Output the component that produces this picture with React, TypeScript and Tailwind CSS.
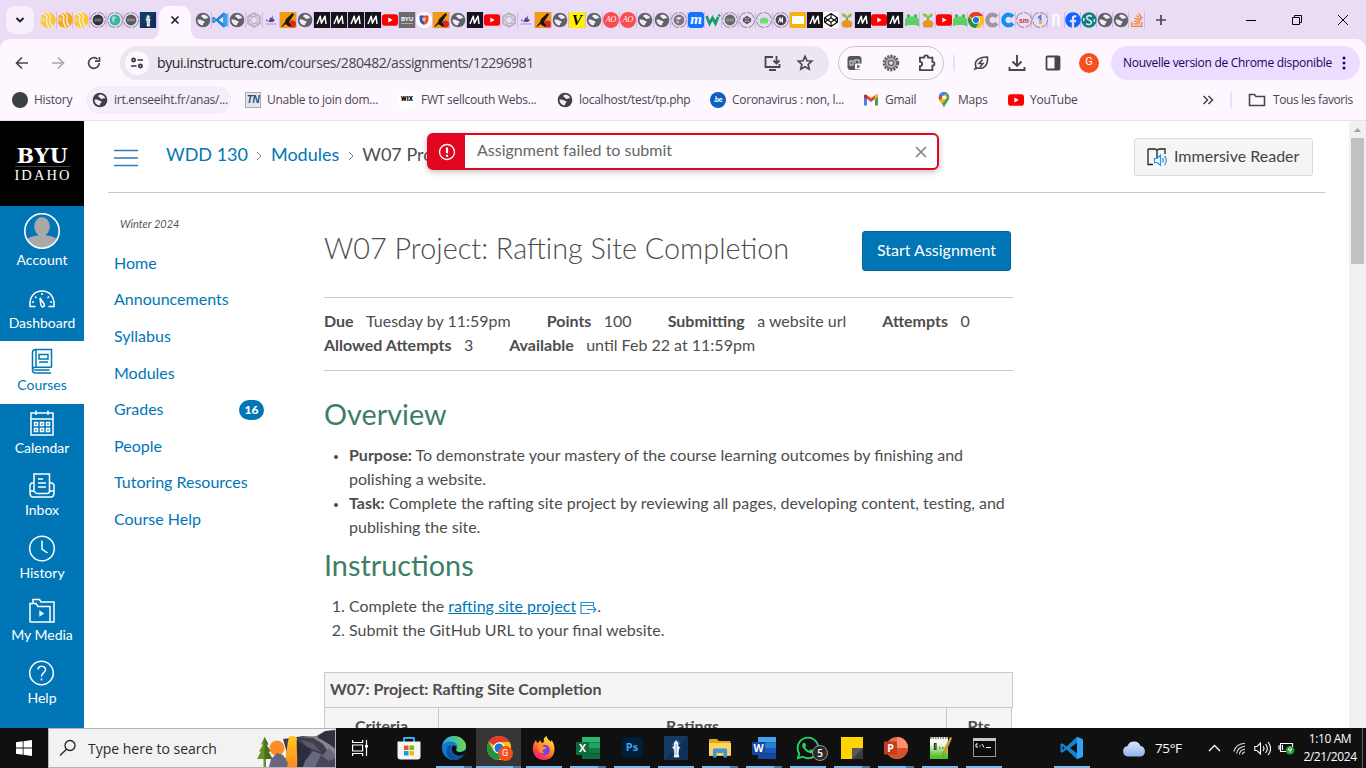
import React from "react";
import { FaFacebook, FaStackOverflow, FaCodepen, FaWhatsapp } from "react-icons/fa";

type P = { s?: number };

const Globe = ({ s = 16, c = "#5f6368" }: P & { c?: string }) => (
  <svg width={s} height={s} viewBox="0 0 16 16" className="shrink-0">
    <circle cx="8" cy="8" r="7.3" fill={c} />
    <path d="M8.6 2.6C7 3 6 3.4 6.300 4.600c.3 1 1.700.4 2 1.400.3 1 1.900 1.300 2.700.6.600-.5 1.400-.4 2.300-.3C12.700 4.300 10.800 2.800 8.600 2.600z" fill="#f3eafa" />
    <path d="M2.400 7.800c1.800-.4 3.300-.3 4.300.5.8.7 2.600.4 2.800 1.500.2 1.100-1.200 1.200-1.300 2.100-.1.600-.2 1.300-.9 1.500C4.500 13 2.500 10.600 2.400 7.800z" fill="#f3eafa" />
  </svg>
);

const VSCode = ({ s = 16 }: P) => (
  <svg width={s} height={s} viewBox="0 0 24 24" className="shrink-0">
    <path d="M17 .8L6.500 10.400 2.300 7.200.5 8.100v7.800l1.800.9 4.200-3.200L17 23.200l6-2.600V3.400zM2.700 14V10l2 2zM17 6.800v10.400L10 12z" fill="#1583cf" />
    <path d="M17 .8v22.400l6-2.600V3.400z" fill="#2fa4ee" />
  </svg>
);

const YouTube = ({ s = 16 }: P) => (
  <svg width={s} height={s} viewBox="0 0 16 16" className="shrink-0">
    <rect x="0" y="2.300" width="16" height="11.400" rx="2.800" fill="#f00" />
    <path d="M6.300 5.500v5L10.700 8z" fill="#fff" />
  </svg>
);

const Chrome = ({ s = 16 }: P) => (
  <svg width={s} height={s} viewBox="0 0 24 24" className="shrink-0">
    <circle cx="12" cy="12" r="12" fill="#fbc116" />
    <path d="M12 12L1.600 6A12 12 0 0 1 22.400 6H12z" fill="#e33b2e" />
    <path d="M1.600 6A12 12 0 0 0 12 24l5.200-9L12 12 6.800 15z" fill="#229342" />
    <path d="M22.400 6A12 12 0 0 1 12 24l5.200-9V6z" fill="#fbc116" />
    <circle cx="12" cy="12" r="5.800" fill="#fff" />
    <circle cx="12" cy="12" r="4.500" fill="#1a73e8" />
  </svg>
);

const MBox = () => (
  <span className="flex h-4 w-4 shrink-0 items-center justify-center bg-[#15141a]">
    <svg width="12" height="10" viewBox="0 0 12 10" fill="none" stroke="#fff" strokeWidth="1.500" strokeLinejoin="round">
      <path d="M1 9L4.200 1.200 5.400 8.200 9 1.200 10 9" />
    </svg>
  </span>
);

const Road = ({ c }: { c: string }) => (
  <svg width="16" height="16" viewBox="0 0 16 16" className="shrink-0">
    <circle cx="8" cy="8" r="7.800" fill={c} />
    <path d="M2 1.500c6 1.500 5 4.500 4.500 6S7 12 9 15.500M5.500 0c5.500 2 5 4.500 4.500 6.500s0 5 2.500 8" stroke="#f7eadf" strokeWidth="1.400" fill="none" />
    <path d="M0 2l3-2H0zM0 4l5 2c0 3-1 4-5 4z" fill="#ebdcf6" opacity=".5" />
  </svg>
);

const Ring = ({ c, children }: { c?: string; children?: React.ReactNode }) => (
  <svg width="16" height="16" viewBox="0 0 16 16" className="shrink-0">
    <circle cx="8" cy="8" r="7.400" fill="none" stroke="#8c8792" strokeWidth="1" strokeDasharray="10 1.600" />
    {c && <circle cx="8" cy="8" r="5.400" fill={c} />}
    {children}
  </svg>
);

const Lighthouse = ({ s = 16 }: P) => (
  <svg width={s} height={s} viewBox="0 0 24 24" className="shrink-0">
    <rect width="24" height="24" fill="#143a63" />
    <path d="M0 24L24 0v24z" fill="#0f3158" />
    <path d="M5 5c5 3 3 9 5 13l1 4h3V9l3-2-4-3-3 1-1 3z" fill="#6e93b4" opacity=".4" />
    <path d="M10 7l2.100-2.800L14.300 7v3l2.200 2-1.500.8-.4 5.500.8 3h-5.800l.8-3L10 12.800 8 12l2-2z" fill="#eef4f8" />
    <path d="M12.100 8v11" stroke="#7d98b3" strokeWidth=".8" />
  </svg>
);

const Hex = () => (
  <svg width="16" height="16" viewBox="0 0 16 16" className="shrink-0" fill="none" stroke="#b9b4bd">
    <path d="M8 1.200l6 3.400v6.800l-6 3.400-6-3.400V4.600z" strokeWidth="1.900" />
    <path d="M8 4.300l3.300 1.900v3.700L8 11.800 4.700 9.900V6.200zM8 1.500L11 6M14 5l-3 4.500M13.500 11l-5.500.5M8 14.500L5 10M2 11l3-4.500M2.500 5L8 4.500" strokeWidth="1" />
  </svg>
);

const Boat = () => (
  <svg width="16" height="16" viewBox="0 0 16 16" className="shrink-0">
    <path d="M6 8.500L7.500 5l.8 1.500L9.500 3l.3 3.500L12 8l-2 2H5zM3.500 7L5 8.500 3 9.500z" fill="#54489b" />
    <path d="M2.500 12h11" stroke="#aaa3cf" strokeWidth="1.200" />
  </svg>
);

const Rocket = () => (
  <svg width="16" height="16" viewBox="0 0 16 16" className="shrink-0">
    <rect width="16" height="16" fill="#f39c0c" />
    <circle cx="12.500" cy="12" r="3.500" fill="#d7261e" />
    <path d="M12.500 1l1.500 1.500L9 10l-3 1.500L2 15l-.5-.7L5 10l1-3z" fill="#1c1614" />
    <path d="M7 8l4 5-1 2-5-3z" fill="#1c1614" />
  </svg>
);

const Frog = () => (
  <svg width="16" height="16" viewBox="0 0 16 16" className="shrink-0" fill="#5fd068">
    <path d="M1 8.500C1 6 3 4.500 8 4.500S15 6 15 8.500L14 13H2z" />
    <circle cx="4.500" cy="4" r="1.900" /><circle cx="11.500" cy="4" r="1.900" />
    <path d="M1 9l2.500 5H1zM15 9l-2.500 5H15z" />
    <circle cx="4.500" cy="4" r=".7" fill="#1d5c30" /><circle cx="11.500" cy="4" r=".7" fill="#1d5c30" />
  </svg>
);

const Plant = () => (
  <svg width="16" height="16" viewBox="0 0 16 16" className="shrink-0">
    <path d="M8 9V5" stroke="#4c9a2a" strokeWidth="1.500" />
    <path d="M8 5.500C5 6 3 4.500 2.500 1.500 6 1 8 2.500 8 5.500zM8 6c0-3 2-4.500 5-4.500C13 4.500 11 6.500 8 6z" fill="#86c440" />
    <ellipse cx="8" cy="11.700" rx="5.500" ry="3.800" fill="#e8961e" />
    <path d="M3 13.500c2 2.500 8 2.500 10 0l-1 1.700H4z" fill="#a85c10" />
  </svg>
);

const Sq = ({ cls, children }: { cls: string; children?: React.ReactNode }) => (
  <span className={"flex h-4 w-4 shrink-0 items-center justify-center leading-none " + cls}>{children}</span>
);

const AO = () => <Sq cls="rounded-full bg-[#fb4b50] font-['Liberation_Serif'] text-[8px] italic text-white">AO</Sq>;
const BYUMini = () => (
  <Sq cls="flex-col bg-[#6b6b6b] font-['Lato'] text-[6px] font-black text-white"><span>BYU</span><span className="mt-px h-px w-3 bg-[#aaa]" /></Sq>
);
const C = ({ c }: { c: string }) => (
  <svg width="16" height="16" viewBox="0 0 16 16" className="shrink-0">
    <path d="M12.800 4.800A5.300 5.300 0 1 0 12.800 11.200" fill="none" stroke={c} strokeWidth="4.200" />
  </svg>
);

const group1 = [
  <Road c="#fdc82f" />, <Road c="#f5a81c" />, <Road c="#fdc82f" />,
  <Ring c="#33343a"><path d="M4.500 7.200h7M4.500 8.800h7" stroke="#a9a9a9" strokeWidth=".7" /></Ring>,
  <Ring c="#38b59f"><path d="M5 5l3-1 1 2-2 2 1 3-3-2z" fill="#9be0d3" /></Ring>,
  <Ring c="#55565a"><path d="M4 7.200h8M4 8.800h8" stroke="#b9b9b9" strokeWidth=".7" /></Ring>,
  <Lighthouse />,
];

const group2 = [
  <Globe />, <VSCode />, <Globe />, <Hex />, <Boat />, <Rocket />, <Globe />,
  <MBox />, <MBox />, <MBox />, <MBox />, <YouTube />, <BYUMini />,
  <svg width="16" height="16" viewBox="0 0 16 16" className="shrink-0"><circle cx="8" cy="8" r="8" fill="#fff" /><path d="M3.500 3.500H8V13C5 12 3.500 10 3.500 7z" fill="#2b4fd8" /><path d="M8 3.500h4.500V7C12.500 10 11 12 8 13z" fill="#e8453c" /><path d="M6.300 5.500h3.400v2.500L8 10 6.300 8z" fill="#ffc94a" /></svg>,
  <Rocket />, <Globe />, <MBox />, <YouTube />, <Hex />, <Boat />, <Rocket />, <Globe />,
  <Sq cls="bg-[#fff200] font-['Liberation_Serif'] text-[15px] font-bold italic text-black">V</Sq>,
  <Globe />, <AO />, <AO />, <Globe />, <Globe />,
  <Ring c="#7b7780"><path d="M5 7c2-3 4-2 5.500-1.500L9 7.500 6.500 7.500zM5 9l3 .5-1 2z" fill="#ebdcf6" /></Ring>,
  <svg width="16" height="16" viewBox="0 0 16 16" className="shrink-0"><rect width="16" height="16" rx="3" fill="#1673ff" /><text x="8" y="11.500" fontSize="15" fontWeight="700" fontStyle="italic" textAnchor="middle" fill="#fff" fontFamily="Liberation Serif">m</text></svg>,
  <svg width="16" height="16" viewBox="0 0 16 16" className="shrink-0"><path d="M1.500 4l3 7.500L7.500 6l3 5.500L13 5" fill="none" stroke="#13a06f" strokeWidth="2.800" /><circle cx="14.200" cy="3.500" r="1.300" fill="#13a06f" /></svg>,
  <Ring c="#67686c"><path d="M4 7.200h8M4 8.800h8" stroke="#b9b9b9" strokeWidth=".7" /></Ring>,
  <Ring><path d="M8 4.500l3.500 2.300v2.400L8 11.500 4.500 9.200V6.800zM8 4.500V7M8 9v2.500M4.500 6.800l7 2.400M11.500 6.800l-7 2.400" stroke="#55515a" fill="none" strokeWidth="1.200" /></Ring>,
  <Ring><path d="M3.500 8c0-3.500 9-3.500 9 0l-1 3.500h-7z" fill="#6fdc78" /></Ring>,
  <Ring c="#47464e"><path d="M5.500 10.500L7 5.500l.8 4.500L9.500 5.500v5" stroke="#fff" fill="none" /></Ring>,
  <Sq cls="rounded-[2px] bg-[#f4b400]"><span className="h-2 w-3 bg-white" /></Sq>,
];

const group3 = [
  <MBox />,
  <Sq cls="bg-white"><FaCodepen size={14} color="#111" /></Sq>,
  <Plant />, <MBox />, <YouTube />, <MBox />, <Frog />, <Plant />, <YouTube />, <Frog />, <Chrome />,
  <C c="#9b979b" />, <C c="#0c93f5" />,
  <Ring><text x="8" y="10.500" fontSize="7" fontWeight="700" textAnchor="middle" fill="#c33a34" fontFamily="Liberation Sans">sm</text></Ring>,
  <Ring><path d="M6 6l2.500-2v8" stroke="#3f82ee" strokeWidth="1.900" fill="none" /><path d="M8.500 8v4" stroke="#eeb32e" strokeWidth="1.900" /></Ring>,
  <svg width="16" height="16" viewBox="0 0 16 16" className="shrink-0"><path d="M5.500 2v12M6.500 4.500c1.500-2.500 4-1.500 4 1V14" stroke="#fbf7ff" strokeWidth="2.600" fill="none" /></svg>,
  <FaFacebook size={16} color="#0866ff" className="shrink-0" />,
  <svg width="16" height="16" viewBox="0 0 16 16" className="shrink-0"><circle cx="8" cy="8" r="7.700" fill="#147d80" /><path d="M11 4.500C8 2.500 4.500 4.500 6 6.700s5 1.300 4.500 4-4 2-5.500 1" stroke="#d5f0ee" strokeWidth="1.500" fill="none" /><path d="M2.800 6v3M13.300 7v3" stroke="#d5f0ee" strokeWidth="1.500" /></svg>,
  <Globe />, <Globe />,
  <FaStackOverflow size={16} color="#f48024" className="shrink-0" />,
];

const Tabs = ({ items, cell }: { items: React.ReactNode[]; cell: string }) => (
  <>
    {items.map((it, i) => (
      <span key={i} className={"flex shrink-0 items-center border-r border-[#d3b8f6] " + cell}>{it}</span>
    ))}
  </>
);

const ui = "font-['Open_Sans','Noto_Sans',sans-serif]";

const TabStrip = () => (
  <div className="flex h-10 items-stretch bg-[#ebdcf6]">
    <div className="flex w-10 shrink-0 items-center pl-1.5">
      <span className="flex h-7 w-7 items-center justify-center rounded-[9px] bg-[#f8effd]">
        <svg width="10" height="8" viewBox="0 0 10 8" fill="none" stroke="#1d1b20" strokeWidth="1.800"><path d="M1.500 2L5 5.500 8.500 2" /></svg>
      </span>
    </div>
    <div className="flex w-[119px] shrink-0 items-center"><div className="flex h-4"><Tabs items={group1} cell="w-[16.7px]" /></div></div>
    <div className="flex w-9 shrink-0 items-end">
      <div className="relative flex h-[34px] w-8 items-center justify-center rounded-t-[10px] bg-[#fef7ff] pb-1.5">
        <svg width="10" height="10" viewBox="0 0 10 10" stroke="#1d1b20" strokeWidth="1.600"><path d="M1.500 1.500l7 7M8.500 1.500l-7 7" /></svg>
        <svg width="10" height="10" viewBox="0 0 10 10" className="absolute bottom-0 -left-[10px]" fill="#fef7ff"><path d="M10 0v10H0A10 10 0 0 0 10 0z" /></svg>
        <svg width="10" height="10" viewBox="0 0 10 10" className="absolute -right-[10px] bottom-0" fill="#fef7ff"><path d="M0 0v10h10A10 10 0 0 1 0 0z" /></svg>
      </div>
    </div>
    <div className="flex w-[612px] shrink-0 items-center"><div className="flex h-4"><Tabs items={group2} cell="w-[17px]" /></div></div>
    <div className="flex w-[340px] shrink-0 items-center"><div className="flex h-4"><Tabs items={group3} cell="w-[16.1px]" /></div></div>
    <div className="flex flex-1 items-center">
      <svg width="28" height="12" viewBox="0 0 28 12" stroke="#49454f" strokeWidth="1.700"><path d="M14 1v10M9 6h10" /></svg>
      <svg width="14" height="12" viewBox="0 0 14 12" className="ml-[69px]" stroke="#000"><path d="M2 6.500h10" /></svg>
      <svg width="12" height="12" viewBox="0 0 12 12" className="ml-[33px]" fill="none" stroke="#000"><path d="M1.500 3.500h7v7h-7zM3.500 3.500v-2h7v7h-2" /></svg>
      <svg width="12" height="12" viewBox="0 0 12 12" className="ml-[34px]" stroke="#000"><path d="M1 1l10 10M11 1L1 11" /></svg>
    </div>
  </div>
);

const Toolbar = () => (
  <div className="-mt-px bg-[#ebdcf6]">
  <div className="flex h-[47px] items-center rounded-t-[10px] bg-[#fef7ff] pr-1.5">
    <svg width="96" height="20" viewBox="0 0 96 20" className="ml-2.5 shrink-0" fill="none" strokeWidth="1.700">
      <path d="M18 10H7M12 4.500L6.500 10l5.500 5.500" stroke="#49454f" />
      <path d="M42 10h11M48 4.500l5.500 5.500-5.500 5.500" stroke="#aba7ae" />
      <path d="M89.200 10a5.300 5.300 0 1 1-1.600-3.800M89.500 4v4.200H85" stroke="#49454f" />
    </svg>
    <div className="ml-3.5 flex h-[34px] w-[709px] shrink-0 items-center rounded-full bg-[#ede6f0] pl-[5px]">
      <span className="flex h-6 w-6 items-center justify-center rounded-full bg-[#fef7ff]">
        <svg width="12" height="12" viewBox="0 0 12 12" fill="none" stroke="#35313a" strokeWidth="1.700"><circle cx="2.600" cy="3" r="1.600" /><path d="M6.500 3H12M0 9h5.500" /><circle cx="9.400" cy="9" r="1.600" /></svg>
      </span>
      <span className={"ml-2 w-[600px] whitespace-nowrap text-[14px] tracking-[-0.42px] text-[#49454f] " + ui}><span className="text-[#1d1b20]">byui.instructure.com</span>/courses/280482/assignments/12296981</span>
      <svg width="20" height="18" viewBox="0 0 20 18" className="ml-1.5 shrink-0" fill="none" stroke="#49454f" strokeWidth="1.800"><path d="M10 3H2.500v10h14v-3M6 16h7M13.500 2v7M10.500 6.500l3 3 3-3" /></svg>
      <svg width="18" height="18" viewBox="0 0 24 24" className="ml-[13px] shrink-0" fill="none" stroke="#49454f" strokeWidth="2.200"><path d="M12 3l2.600 6 6.400.6-4.800 4.300 1.400 6.300L12 16.900l-5.600 3.300 1.400-6.300L3 9.600 9.400 9z" /></svg>
    </div>
    <div className="ml-[9px] flex h-[34px] w-[106px] shrink-0 items-center rounded-full border border-[#cac4cf] pl-2">
      <svg width="16" height="16" viewBox="0 0 16 16"><rect x=".5" y="1" width="14" height="14" rx="3" fill="#55565a" /><path d="M3 6h3v4H3zM8 8V5h4v3" stroke="#bbb" fill="none" strokeWidth="1.500" /><rect x="8" y="8.500" width="7" height="6" rx="1" fill="#fff" /><path d="M10 9.500l3.500 2-3.500 2z" fill="#666" /></svg>
      <svg width="18" height="18" viewBox="0 0 18 18" className="ml-[19px]"><circle cx="9" cy="9" r="7.200" fill="none" stroke="#5c5c5c" strokeWidth="2.200" strokeDasharray="2.200 1.100" /><circle cx="9" cy="9" r="6.300" fill="#6a6a6a" /><circle cx="9" cy="9" r="4.200" fill="none" stroke="#b5b5b5" strokeWidth="1.800" /><circle cx="9" cy="9" r="1.800" fill="#e7e3ea" /></svg>
      <svg width="20" height="20" viewBox="0 0 24 24" className="ml-[17px]" fill="none" stroke="#49454f" strokeWidth="2.200"><path d="M3.500 5.500h5.200c0-3.500 4.600-3.500 4.600 0h5.200v5.200c3.300 0 3.300 4.600 0 4.600v5.200h-15v-4.700c3.600-.4 3.600-5 0-5.400z" /></svg>
    </div>
    <span className="ml-[9px] h-4 w-0.5 bg-[#eaddff]" />
    <svg width="18" height="18" viewBox="0 0 18 18" className="ml-[17px] shrink-0" fill="none" stroke="#49454f" strokeWidth="1.600"><path d="M3 15l1-2c-2-5 1-10 11.500-10C16 11 12.500 15.500 6 14z M10.500 5.500L7 9.500h4L8 13" /></svg>
    <svg width="18" height="18" viewBox="0 0 18 18" className="ml-[18px] shrink-0" fill="none" stroke="#49454f" strokeWidth="1.900"><path d="M9 1v10.500M4.500 7.500L9 12l4.500-4.500M1.500 13v3h15v-3" /></svg>
    <svg width="16" height="16" viewBox="0 0 16 16" className="ml-[19px] shrink-0"><rect x="1.500" y="1.500" width="13" height="13" rx="1" fill="none" stroke="#49454f" strokeWidth="1.800" /><path d="M9.500 1.500h5v13h-5z" fill="#49454f" /></svg>
    <span className="ml-[18px] flex h-5 w-5 shrink-0 items-center justify-center rounded-full bg-[#f4511e] font-['Roboto'] text-[11px] text-white">G</span>
    <div className="ml-3 flex h-[34px] w-[249px] shrink-0 items-center rounded-full bg-[#eaddff] pl-3">
      <span className={"w-[216px] whitespace-nowrap text-[12px] tracking-[-0.29px] text-[#21005d] " + ui}>Nouvelle version de Chrome disponible</span>
      <svg width="4" height="14" viewBox="0 0 4 14" className="ml-[3px]" fill="#21005d"><circle cx="2" cy="2" r="1.500" /><circle cx="2" cy="7" r="1.500" /><circle cx="2" cy="12" r="1.500" /></svg>
    </div>
  </div>
  </div>
);

const BM = ({ w, icon, t, gap = "ml-1.5" }: { w: string; icon: React.ReactNode; t: string; gap?: string }) => (
  <div className={"flex shrink-0 items-center whitespace-nowrap " + w}>{icon}<span className={gap}>{t}</span></div>
);

const Bookmarks = () => (
  <div className={"flex h-[35px] items-center border-b border-[#e7e0ec] bg-[#fef7ff] pb-[7px] pl-3 text-[12px] tracking-[-0.26px] text-[#49454f] " + ui}>
    <BM w="w-[74px]" icon={<span className="h-4 w-4 rounded-full bg-[#3c4043]" />} t="History" />
    <BM w="w-[145px] h-7 rounded-full bg-[#f5edf7] pl-1.5" icon={<Globe c="#3c4043" />} t="irt.enseeiht.fr/anas/..." />
    <BM w="ml-3.5 w-[154px]" icon={<span className="flex h-4 w-4 items-center justify-center border border-[#aaa] bg-[#dfe7ee] font-['Liberation_Sans'] text-[10px] font-bold italic tracking-tighter text-[#2f4a6d]">TN</span>} t="Unable to join dom..." />
    <BM w="w-[158px]" icon={<span className="flex h-4 w-4 items-center justify-center bg-white font-['Roboto'] text-[6.5px] font-black tracking-normal text-black">WIX</span>} t="FWT sellcouth Webs..." />
    <BM w="w-[153px]" icon={<Globe c="#3c4043" />} t="localhost/test/tp.php" />
    <BM w="w-[153px]" icon={<span className="flex h-4 w-4 items-center justify-center rounded-full bg-[#0d5fc0] font-['Lato'] text-[7px] font-black text-white">.be</span>} t="Coronavirus : non, l..." />
    <BM w="w-[73px]" icon={<svg width="16" height="16" viewBox="0 0 16 16"><path d="M1 4v9.500h3V7z" fill="#4285f4" /><path d="M15 4v9.500h-3V7z" fill="#34a853" /><path d="M1 4.500l7 5.500 7-5.500V3.300c-1-1-2-.8-3 0L8 6.200 4 3.300c-1-.8-2-1-3 0z" fill="#ea4335" /><path d="M12 3.300c1-.8 2-1 3 0v1.500l-3 2.500z" fill="#fbbc04" /><path d="M1 3.500c1-1 2-1 3-.2v4L1 5z" fill="#c5221f" /></svg>} t="Gmail" />
    <BM w="w-[72px]" icon={<svg width="16" height="16" viewBox="0 0 16 16"><path d="M8 0a5.300 5.300 0 0 1 5.300 5.300C13.300 9 9.500 10.500 8 16c-1.500-5.500-5.300-7-5.300-10.700A5.300 5.300 0 0 1 8 0z" fill="#34a853" /><path d="M8 0C5.500 0 4 1.200 3.300 3L8 6.500 11.500 1.200C10.500.4 9.300 0 8 0z" fill="#4285f4" /><path d="M3.300 3c-1 2-.6 3.600.7 5.500l4-3z" fill="#ea4335" /><path d="M4 8.500l5.500-6.500 2 3.500-5 6z" fill="#fbbc04" /><circle cx="8" cy="5.300" r="1.900" fill="#fff" /></svg>} t="Maps" />
    <BM w="w-[194px]" icon={<YouTube />} t="YouTube" />
    <svg width="12" height="10" viewBox="0 0 12 10" fill="none" stroke="#49454f" strokeWidth="1.600"><path d="M1.500 1l4 4-4 4M6.500 1l4 4-4 4" /></svg>
    <span className="ml-[16px] h-4 w-0.5 bg-[#eaddff]" />
    <svg width="18" height="14" viewBox="0 0 18 14" className="ml-4" fill="none" stroke="#49454f" strokeWidth="1.600"><path d="M1.500 12.500V1.500h5l1.500 2h8.500v9z" /></svg>
    <span className="ml-[7px] whitespace-nowrap tracking-[-0.4px]">Tous les favoris</span>
  </div>
);

const NavItem = ({ label, active, children }: { label: string; active?: boolean; children: React.ReactNode }) => (
  <div className={"flex h-[62.5px] shrink-0 flex-col items-center pt-[5.5px] " + (active ? "bg-white text-[#0076b6]" : "text-white")}>
    <svg width="28" height="28" viewBox="0 0 28 28" fill="none" stroke="currentColor" strokeWidth="1.500">{children}</svg>
    <span className="mt-[1.6px] whitespace-nowrap text-[14px] leading-[18px]">{label}</span>
  </div>
);

const Sidebar = () => (
  <div className="flex w-[84px] shrink-0 flex-col overflow-hidden bg-[#0076b6]">
    <div className="flex h-[85px] shrink-0 flex-col items-center bg-black pt-[25px] text-white">
      <span className="pl-px font-['DejaVu_Serif'] text-[20.5px] font-bold leading-[20px] tracking-[0.6px]">BYU</span>
      <span className="h-px w-[55px] bg-[#444]" />
      <span className="pl-[2px] font-['Liberation_Serif'] text-[14.500px] leading-[17px] tracking-[2.1px]">IDAHO</span>
    </div>
    <div className="flex h-[72.5px] shrink-0 flex-col items-center pt-[7px] text-white">
      <svg width="36" height="36" viewBox="0 0 36 36">
        <clipPath id="av"><circle cx="18" cy="18" r="16.500" /></clipPath>
        <g clipPath="url(#av)" fill="#a9a9a9"><ellipse cx="18" cy="13.500" rx="7.800" ry="9.500" /><path d="M14 19h8v3.500c6 .5 10 2 12 5V36H2v-8.500c2-3 6-4.500 12-5z" /></g>
        <circle cx="18" cy="18" r="17.200" fill="none" stroke="#fff" strokeWidth="1.600" />
      </svg>
      <span className="mt-[2px] text-[14px] leading-[18px]">Account</span>
    </div>
    <NavItem label="Dashboard"><path d="M7.500 22.500H2v-3C2 12 7 7 14 7s12 5 12 12.500v3h-5.500M14 9v2M7 12.500l1.500 1.500M21 12.500L19.500 14M4 18h2M22 18h2M12 14l.8 6.500c.5 3.500 4.800 2.500 3.300-.5z" /></NavItem>
    <NavItem label="Courses" active><path d="M23.500 20.500V2.500h-16c-2 0-3 1-3 3v17.500c0 2 1 3 3 3H23M4.700 22.500c0-1.500 1-2.200 2.500-2.200H23.500M8 2.500v18M11 7.500h9v4.500h-9zM11 15h9M6 23h15.500" /></NavItem>
    <NavItem label="Calendar"><path d="M3 4h22v22H3zM3 10h22M8 1.500V6M20 1.500V6M6.500 13.500h3v3h-3zM12.500 13.500h3v3h-3zM18.500 13.500h3v3h-3zM6.500 19.500h3v3h-3zM12.500 19.500h3v3h-3zM18.500 19.500h3v3h-3z" /></NavItem>
    <NavItem label="Inbox"><path d="M6 19V2h15.500v17M10 7h5M10 11h8M10 15h8M6 11H3.500L2 13v7.500c0 3 1 4.500 3 4.500h18c2 0 3-1.500 3-4.500V13l-1.500-2h-3M2.500 19H6c1 2.500 2 2.500 3 2.500h10c1.500 0 2.500-1 2.500-2.500h4" /></NavItem>
    <NavItem label="History"><circle cx="14" cy="14.500" r="12.300" /><path d="M14 6.500v8.500l5.500 4" /></NavItem>
    <NavItem label="My Media"><path d="M2 24.500V6.500h6l2 3h12v15.500H3zM5 6V2.500h6.500l1.500 2.500h13V25h-4" /><path d="M11.500 13.500v6l4.500-3z" fill="currentColor" strokeWidth=".3" /></NavItem>
    <NavItem label="Help"><circle cx="13.500" cy="14" r="11.800" /><path d="M10 10.500C10.500 6 18 6.500 17.500 11c-.3 2.500-4 3-4 6.500M13.500 19.500v2" /></NavItem>
  </div>
);

const Crumb = () => (
  <svg width="6" height="10" viewBox="0 0 6 10" className="mx-[8.5px] mt-1" fill="none" stroke="#7b858c" strokeWidth="1"><path d="M1 1l4 4-4 4" /></svg>
);

const Field = ({ k, v, mr }: { k: string; v: string; mr: string }) => (
  <span className={"whitespace-nowrap " + mr}><b className="mr-[12.4px] font-bold">{k}</b>{v}</span>
);

const Page = () => (
  <div className="relative flex min-h-0 flex-1 overflow-hidden bg-white font-['Lato',sans-serif] text-[16px] leading-6 text-[#4d4d4d]">
    <Sidebar />
    <div className="flex min-w-0 flex-1 flex-col pr-6 pl-6">
      <div className="flex h-[72px] shrink-0 items-start border-b border-[#c9c9c9] pl-1.5">
        <svg width="24" height="18" viewBox="0 0 24 18" className="mt-[28px] shrink-0" stroke="#2b7abc" strokeWidth="1.500"><path d="M0 1.500h24M0 9h24M0 16.500h24" /></svg>
        <div className="ml-7 mt-[20px] flex w-[400px] items-center whitespace-nowrap text-[18px] leading-[26px] text-[#0076b6]">
          <span>WDD 130</span><Crumb /><span>Modules</span><Crumb /><span className="text-[#4d4d4d]">W07 Project</span>
        </div>
        <div className="mt-[17px] mr-3 ml-auto flex h-[38px] w-[179px] items-center rounded-[3px] border border-[#d9d9d9] bg-[#f5f5f5] pl-3">
          <svg width="21" height="19" viewBox="0 0 21 19" fill="none"><path d="M1 1h6.500c1.500 0 2 .5 2.500 1.500C10.500 1.500 11 1 12.500 1H18v5M10 2.500V10M1 1v15.500h5" stroke="#222" strokeWidth="1.300" /><path d="M7.500 10.500H10l3.500-3.300v10L10 14.500H7.500zM15.500 10.200c1 1.300 1 3 0 4.300M17.500 8c2.300 2.500 2.300 6.300 0 8.800" stroke="#2a96e0" strokeWidth="1.200" /></svg>
          <span className="ml-1.5 whitespace-nowrap pb-0.5 text-[#444]">Immersive Reader</span>
        </div>
      </div>
      <div className="flex">
        <div className="w-[216px] shrink-0 pl-1.5 text-[#0076b6]">
          <div className="mt-[21px] pl-1.5 text-[11px] italic leading-5 text-[#555]">Winter 2024</div>
          <div className="mt-[10.6px] flex flex-col">
            {["Home", "Announcements", "Syllabus", "Modules", "Grades", "People", "Tutoring Resources", "Course Help"].map((t) => (
              <div key={t} className="flex h-[36.6px] items-center justify-between pr-[60px]">
                <span className="whitespace-nowrap">{t}</span>
                {t === "Grades" && <span className="mt-px flex h-5 w-[25px] shrink-0 items-center justify-center rounded-full bg-[#0076b6] text-[12px] font-black text-white">16</span>}
              </div>
            ))}
          </div>
        </div>
        <div className="flex w-[689px] shrink-0 flex-col">
          <div className="flex h-[104px] shrink-0 items-start justify-between pr-0.5">
            <h1 className="mt-[35px] whitespace-nowrap text-[28.8px] font-light leading-10">W07 Project: Rafting Site Completion</h1>
            <div className="mt-[38px] flex h-10 w-[149px] items-center justify-center rounded-[3px] border border-[#00659b] bg-[#0076b6] pb-0.5 whitespace-nowrap text-white">Start Assignment</div>
          </div>
          <div className="flex h-[74px] shrink-0 flex-col border-y border-[#c9c9c9] pt-[11px]">
            <div className="flex"><Field k="Due" v="Tuesday by 11:59pm" mr="mr-9" /><Field k="Points" v="100" mr="mr-9" /><Field k="Submitting" v="a website url" mr="mr-9" /><Field k="Attempts" v="0" mr="" /></div>
            <div className="flex"><Field k="Allowed Attempts" v="3" mr="mr-9" /><Field k="Available" v="until Feb 22 at 11:59pm" mr="" /></div>
          </div>
          <h2 className="mt-[23px] text-[28.8px] leading-10 text-[#3c7f65]">Overview</h2>
          <ul className="mt-[9px] list-disc pl-[25px] marker:text-[12px]">
            <li><b>Purpose:</b> To demonstrate your mastery of the course learning outcomes by finishing and<br />polishing a website.</li>
            <li><b>Task:</b> Complete the rafting site project by reviewing all pages, developing content, testing, and<br />publishing the site.</li>
          </ul>
          <h2 className="mt-[6px] text-[28.8px] leading-10 text-[#3c7f65]">Instructions</h2>
          <ol className="mt-[9px] list-decimal pl-[25px]">
            <li>Complete the <span className="text-[#0076b6] underline">rafting site project</span><svg width="17" height="14" viewBox="0 0 17 14" className="ml-1 inline-block" fill="none" stroke="#2b8fca" strokeWidth="1.200"><path d="M13.500 4.500V1.500H1v11h9M1 4.500h12.500M7 8.500h9M13 5.500l3 3-3 3" /></svg>.</li>
            <li>Submit the GitHub URL to your final website.</li>
          </ol>
          <div className="mt-[30px] flex h-9 shrink-0 items-center border border-[#c9c9c9] bg-[#f5f5f5] pb-0.5 pl-[5px] font-bold">W07: Project: Rafting Site Completion</div>
          <div className="mr-px flex h-10 shrink-0 border-x border-[#c9c9c9] bg-[#f5f5f5] text-center font-bold">
            <div className="w-[114px] border-r border-[#c9c9c9] pt-1.5">Criteria</div>
            <div className="flex-1 border-r border-[#c9c9c9] pt-1.5">Ratings</div>
            <div className="w-16 pt-1.5">Pts</div>
          </div>
        </div>
      </div>
    </div>
    <div className="flex w-[17px] shrink-0 flex-col items-center bg-[#f1f1f1]">
      <svg width="7" height="4" viewBox="0 0 7 4" className="mt-[7px] mb-1.5" fill="#a3a3a3"><path d="M0 4l3.500-4L7 4z" /></svg>
      <span className="h-[126px] w-[13px] bg-[#c1c1c1]" />
    </div>
    <div className="absolute top-3 left-[427px] flex h-[37px] w-[512px] items-center rounded-[6px] border-2 border-[#e0061f] bg-white shadow-[0_2px_6px_rgba(0,0,0,0.25)]">
      <span className="flex h-full w-9 items-center justify-center bg-[#e0061f]">
        <svg width="18" height="18" viewBox="0 0 18 18" fill="none" stroke="#fff"><circle cx="9" cy="9" r="7.500" strokeWidth="1.300" /><path d="M9 4.500v5.700M9 11.700v2" strokeWidth="2.200" /></svg>
      </span>
      <span className="ml-3 pb-1 text-[#666]">Assignment failed to submit</span>
      <svg width="12" height="12" viewBox="0 0 12 12" className="mr-2.5 ml-auto" stroke="#777f85" strokeWidth="1.500"><path d="M1 1l10 10M11 1L1 11" /></svg>
    </div>
  </div>
);

const Office = ({ l, c1, c2, c3, c4 }: { l: string; c1: string; c2: string; c3: string; c4: string }) => (
  <svg width="24" height="22" viewBox="0 0 24 22">
    <path d="M6 0h18v5.500H6z" fill={c1} /><path d="M6 5.500h18V11H6z" fill={c2} /><path d="M6 11h18v5.500H6z" fill={c3} /><path d="M6 16.500h18V22H6z" fill={c4} />
    <rect x="0" y="5" width="13" height="13" rx="1" fill={c4} />
    <text x="6.500" y="15.300" fontSize="10.500" fontWeight="700" textAnchor="middle" fill="#fff" fontFamily="Open Sans">{l}</text>
  </svg>
);

const Slot = ({ w = "w-11", bar = true, split, hot, children }: { w?: string; bar?: boolean; split?: boolean; hot?: boolean; children?: React.ReactNode }) => (
  <div className={"flex h-10 shrink-0 flex-col items-center " + w + (hot ? " bg-[#363636]" : "")}>
    <div className="flex h-[38px] items-center justify-center pt-px">{children}</div>
    <div className={"flex h-0.5 " + (hot ? "w-full" : "w-9")}>
      {bar && <><span className="flex-1 bg-[#76b9ed]" />{split && <span className="w-2 bg-[#4a7ba3]" />}</>}
    </div>
  </div>
);

const Taskbar = () => (
  <div className="flex h-10 shrink-0 items-center bg-[#101010] text-white">
    <div className="flex w-12 shrink-0 justify-center"><svg width="16" height="16" viewBox="0 0 16 16" fill="#fff"><path d="M0 2.200L6.700 1.300v6.300H0zM7.500 1.200L16 0v7.600H7.500zM0 8.400h6.700v6.300L0 13.800zM7.500 8.400H16V16l-8.500-1.200z" /></svg></div>
    <div className={"flex h-10 w-[288px] shrink-0 items-center overflow-hidden border border-[#b5b5b5] bg-[#f2f2f2] text-[#2b2b2b] " + ui}>
      <svg width="18" height="18" viewBox="0 0 18 18" className="ml-2.5 shrink-0" fill="none" stroke="#222" strokeWidth="1.300"><circle cx="11" cy="6.500" r="5" /><path d="M7.500 10.200L1 16.500" /></svg>
      <span className="ml-[11px] w-[169px] shrink-0 whitespace-nowrap text-[14px]">Type here to search</span>
      <svg width="80" height="38" viewBox="0 0 80 38" className="shrink-0">
        <defs><linearGradient id="wf" x2="0" y2="1"><stop offset="0" stopColor="#ffcb1f" /><stop offset="1" stopColor="#ff8a1f" /></linearGradient></defs>
        <circle cx="20" cy="19" r="7.500" fill="#ff8c2a" />
        <path d="M26 10l8-1 12-2 12 1 10-6 12-1v37H26l4-14z" fill="#3d3d50" />
        <path d="M38 10l8 6 8 4-6 18H40z" fill="#2c2c3c" />
        <path d="M42 8l14 1 10 6 8 12 6 3V14l-10-6-10-1z" fill="#8d8187" />
        <path d="M60 8l10-6 10-1v20l-8-6z" fill="#2e2f3f" />
        <path d="M44 11l12 3 8 9-14-5z" fill="#5b586c" />
        <path d="M33 7c-3 4-2 10-4 18v13h11c1-9-1-20 0-29l-3-2z" fill="url(#wf)" />
        <path d="M14 30l6-6 6 2 5 8-1 4H12zM48 32l8-10 10 4 6-7 8 9v10H46z" fill="#686780" />
        <path d="M58 38l6-12 8 6 8-4v10z" fill="#48465c" />
        <path d="M7.500 8l4 7.500h-2l4 7h-2l4 7.500H9v8H6.500v-8H0l4-7.500H2l4-7h-2z" fill="#6b8f22" />
        <path d="M7.500 8l4 7.500h-2l4 7h-2l4 7.500h-8z" fill="#486f1c" />
      </svg>
    </div>
    <div className="flex w-[51px] shrink-0 items-center pl-4"><svg width="17" height="16" viewBox="0 0 17 16" fill="none" stroke="#fff" strokeWidth="1.200"><path d="M.6 0v2.500h10V0M.6 5h10v6H.6zM.6 16v-2.500h10V16M14.500 0v16" /><path d="M13 5h3v2.500h-3z" fill="#fff" stroke="none" /></svg></div>
    <Slot w="w-11" bar={false}><svg width="24" height="24" viewBox="0 0 24 24"><path d="M7 6V2h10v4" fill="none" stroke="#29b1f0" strokeWidth="1.800" /><path d="M.5 5.500h23v15c0 2-1 3-3 3h-17c-2 0-3-1-3-3z" fill="#f4f4f4" /><path d="M7 9.500h4.500V14H7z" fill="#f25022" /><path d="M12.500 9.500H17V14h-4.500z" fill="#7fba00" /><path d="M7 15h4.500v4.500H7z" fill="#00a4ef" /><path d="M12.500 15H17v4.500h-4.500z" fill="#ffb900" /></svg></Slot>
    <Slot w="w-[45px]" split><svg width="24" height="24" viewBox="0 0 24 24">
      <defs><linearGradient id="eg" x1="0" x2="1"><stop offset="0" stopColor="#2aa7e6" /><stop offset="1" stopColor="#6bdc4a" /></linearGradient></defs>
      <circle cx="12" cy="12" r="12" fill="#1478d0" />
      <path d="M.3 10C1 4 6 0 12 0c7 0 12 5 12 10 0 4-3 6-6 6-3.500 0-4.500-1.500-3.500-3C17 9 13 5.500 8.500 5.500 4.500 5.500 1.300 7.500.3 10z" fill="url(#eg)" />
      <path d="M8.500 13c0 5 5 8 9 7.500 2-.2 3.500-1.500 4.500-2C20 22 16.500 24 12.500 24 8 24 4.500 20 4.500 15.500c0-3.500 2-6 4.500-7-.3 1.500-.5 3-.5 4.500z" fill="#0c4f9e" />
      <path d="M9.500 12.500c0-2 1-3 2.500-3s2.800 1.300 2.500 3c-1 1.500 0 3.500 3.500 3.500 2 0 4.500-.8 5.700-3 0 2-.7 4.500-1.700 5.500-6 3.500-12.500 0-12.500-6z" fill="#101010" />
    </svg></Slot>
    <Slot w="w-[45px]" hot split>
      <span className="relative flex"><Chrome s={24} /><span className="absolute top-2.5 left-[11px] flex h-[15px] w-[15px] items-center justify-center rounded-full bg-[#f4511e] font-['Roboto'] text-[9px] leading-none">G</span></span>
    </Slot>
    <Slot w="w-[45px]"><svg width="24" height="24" viewBox="0 0 24 24">
      <defs><linearGradient id="ff" x1=".8" y1="0" x2=".2" y2="1"><stop offset="0" stopColor="#fff34a" /><stop offset=".4" stopColor="#ff9a1f" /><stop offset=".75" stopColor="#ff3b47" /><stop offset="1" stopColor="#e0207e" /></linearGradient></defs>
      <path d="M4 4l1 3 2-1 1-2 2 3 2-1C11 3 12.500 1 14.500 0c.5 3 3 4.500 4.500 6l.5-2c5 6 4.500 20-7.500 20C4 24 .5 18 .8 12 1 9 2 6 4 4z" fill="url(#ff)" />
      <circle cx="12.500" cy="14" r="5.300" fill="#7542e5" /><path d="M6 9c4-1.500 5.500 2 7 2 2 0 1.500 2-1 2.500-2.500.7-1.500 3 1 3.500-5 2-8-4-7-8z" fill="#ff8f26" />
    </svg></Slot>
    <Slot split><Office l="X" c1="#2cb673" c2="#21a366" c3="#107c41" c4="#106b3a" /></Slot>
    <Slot><span className="flex h-[21px] w-[21px] items-center justify-center rounded-[4px] bg-[#001e36] font-['Open_Sans'] text-[11px] font-bold text-[#31a8ff]">Ps</span></Slot>
    <Slot><Lighthouse s={24} /></Slot>
    <Slot split><svg width="22" height="20" viewBox="0 0 22 20"><path d="M0 1h8l2 2h11.500v15H0z" fill="#e5a50f" /><path d="M0 5h22v12.500H0z" fill="#fcd462" /><path d="M4 19.500V12c0-1 .5-1.500 1.500-1.500h11c1 0 1.500.5 1.500 1.500v7.500h-3.500V15h-7v4.500z" fill="#3d94d8" /></svg></Slot>
    <Slot split><Office l="W" c1="#41a5ee" c2="#2b7cd3" c3="#185abd" c4="#1648a0" /></Slot>
    <Slot><span className="relative flex"><FaWhatsapp size={26} color="#25d366" /><span className="absolute top-[10px] left-[17px] flex h-4 w-4 items-center justify-center rounded-full border border-[#999] bg-[#2b2b2b] font-['Open_Sans'] text-[10px] font-semibold leading-none">5</span></span></Slot>
    <Slot split><svg width="22" height="22" viewBox="0 0 22 22"><path d="M0 0h22v11L11 22H0z" fill="#fed500" /><path d="M11 22h11V11H11z" fill="#3c3c3c" /><path d="M11 11h11L11 22z" fill="#55585d" /></svg></Slot>
    <Slot split><svg width="24" height="24" viewBox="0 0 24 24"><circle cx="13" cy="12" r="11" fill="#ed6c47" /><path d="M13 1a11 11 0 0 1 11 11H13z" fill="#ff8f6b" /><path d="M24 12a11 11 0 0 1-21 4l10-4z" fill="#d35230" /><rect y="5.500" width="13" height="13" rx="1" fill="#c43e1c" /><text x="6.500" y="15.800" fontSize="10.500" fontWeight="700" textAnchor="middle" fill="#fff" fontFamily="Open Sans">P</text></svg></Slot>
    <Slot><svg width="23" height="24" viewBox="0 0 23 24"><defs><linearGradient id="np" x2="0" y2="1"><stop offset=".3" stopColor="#f4f9e8" /><stop offset=".9" stopColor="#4fc322" /></linearGradient></defs><path d="M1 1h18v22H1z" fill="url(#np)" /><path d="M1 2h18" stroke="#888" strokeDasharray="1.500 1" strokeWidth="2" /><path d="M5.500 7.500h1.500v6H5.500zM10 12h1.500M13 12h1.500" stroke="#333" strokeWidth="1.200" fill="none" /><path d="M21 1l2 1-7 16-2 2v-3z" fill="#e8a33a" stroke="#7b5a22" strokeWidth=".5" /></svg></Slot>
    <Slot><svg width="23" height="19" viewBox="0 0 23 19"><rect x=".5" y=".5" width="22" height="18" fill="#0c0c0c" stroke="#999" /><path d="M0 0h23v3H0z" fill="#c9c9c9" /><path d="M3 6h2M3 6v3h2M7 7v.8M7 8.500v.8M9 6l2 3.500M13 9.500h5" stroke="#fff" fill="none" /></svg></Slot>
    <Slot bar={false} />
    <Slot><VSCode s={24} /></Slot>
    <div className={"flex flex-1 items-center " + ui}>
      <svg width="25" height="17" viewBox="0 0 25 17" className="ml-7 shrink-0"><defs><linearGradient id="cl" x2="0" y2="1"><stop offset="0" stopColor="#d9e6fb" /><stop offset="1" stopColor="#8fb2ee" /></linearGradient></defs><path d="M6 16.500a5.300 5.300 0 0 1-.5-10.500A7 7 0 0 1 18.500 6 5.400 5.400 0 0 1 19 16.500z" fill="url(#cl)" /></svg>
      <span className="ml-2 w-[53px] shrink-0 text-[13.5px] tracking-[-0.4px]">75°F</span>
      <svg width="13" height="8" viewBox="0 0 13 8" className="shrink-0" fill="none" stroke="#fff" strokeWidth="1.300"><path d="M1 7l5.500-5.500L12 7" /></svg>
      <svg width="13" height="13" viewBox="0 0 13 13" className="ml-3 shrink-0" fill="none" stroke="#ddd" strokeWidth="1.100"><path d="M.8 9.500C2 5 6 1.500 12 1.200M3.500 11.500C4 7.500 7.500 4.500 12 4.200M6.500 12.500c0-3 2.500-5 5.500-5.300M9.500 12.500c0-1.500 1-2.300 2.500-2.500" /></svg>
      <svg width="17" height="15" viewBox="0 0 17 15" className="ml-2 shrink-0" fill="none" stroke="#fff" strokeWidth="1.100"><path d="M.8 5.500H3L6.500 2v11L3 9.500H.8zM9 5c1.200 1.500 1.200 3.500 0 5M11.500 3c2.300 2.800 2.300 6.200 0 9M14 1c3.200 4 3.200 9 0 13" /></svg>
      <svg width="17" height="14" viewBox="0 0 17 14" className="ml-[7px] shrink-0" fill="none" stroke="#fff" strokeWidth="1.100"><path d="M2.500 2.500h12v8h-12zM2.500 5H1v3h1.500M4.500 4v5" /><circle cx="12" cy="9.300" r="4.300" fill="#1b9c38" stroke="none" /><path d="M12 12V8M10.300 9c0-2 1-2.500 1.700-2.500S13.700 7 13.700 9z" strokeWidth=".8" /></svg>
      <div className="ml-0.5 flex w-[66px] shrink-0 flex-col items-center whitespace-nowrap text-[12px] leading-[18px] tracking-[-0.4px]"><span>1:10 AM</span><span>2/21/2024</span></div>
      <span className="-ml-px h-10 w-px bg-[#666]" />
    </div>
  </div>
);

export default function App() {
  return (
    <div className="flex h-[768px] w-[1366px] flex-col overflow-hidden bg-white">
      <TabStrip />
      <Toolbar />
      <Bookmarks />
      <Page />
      <Taskbar />
    </div>
  );
}
